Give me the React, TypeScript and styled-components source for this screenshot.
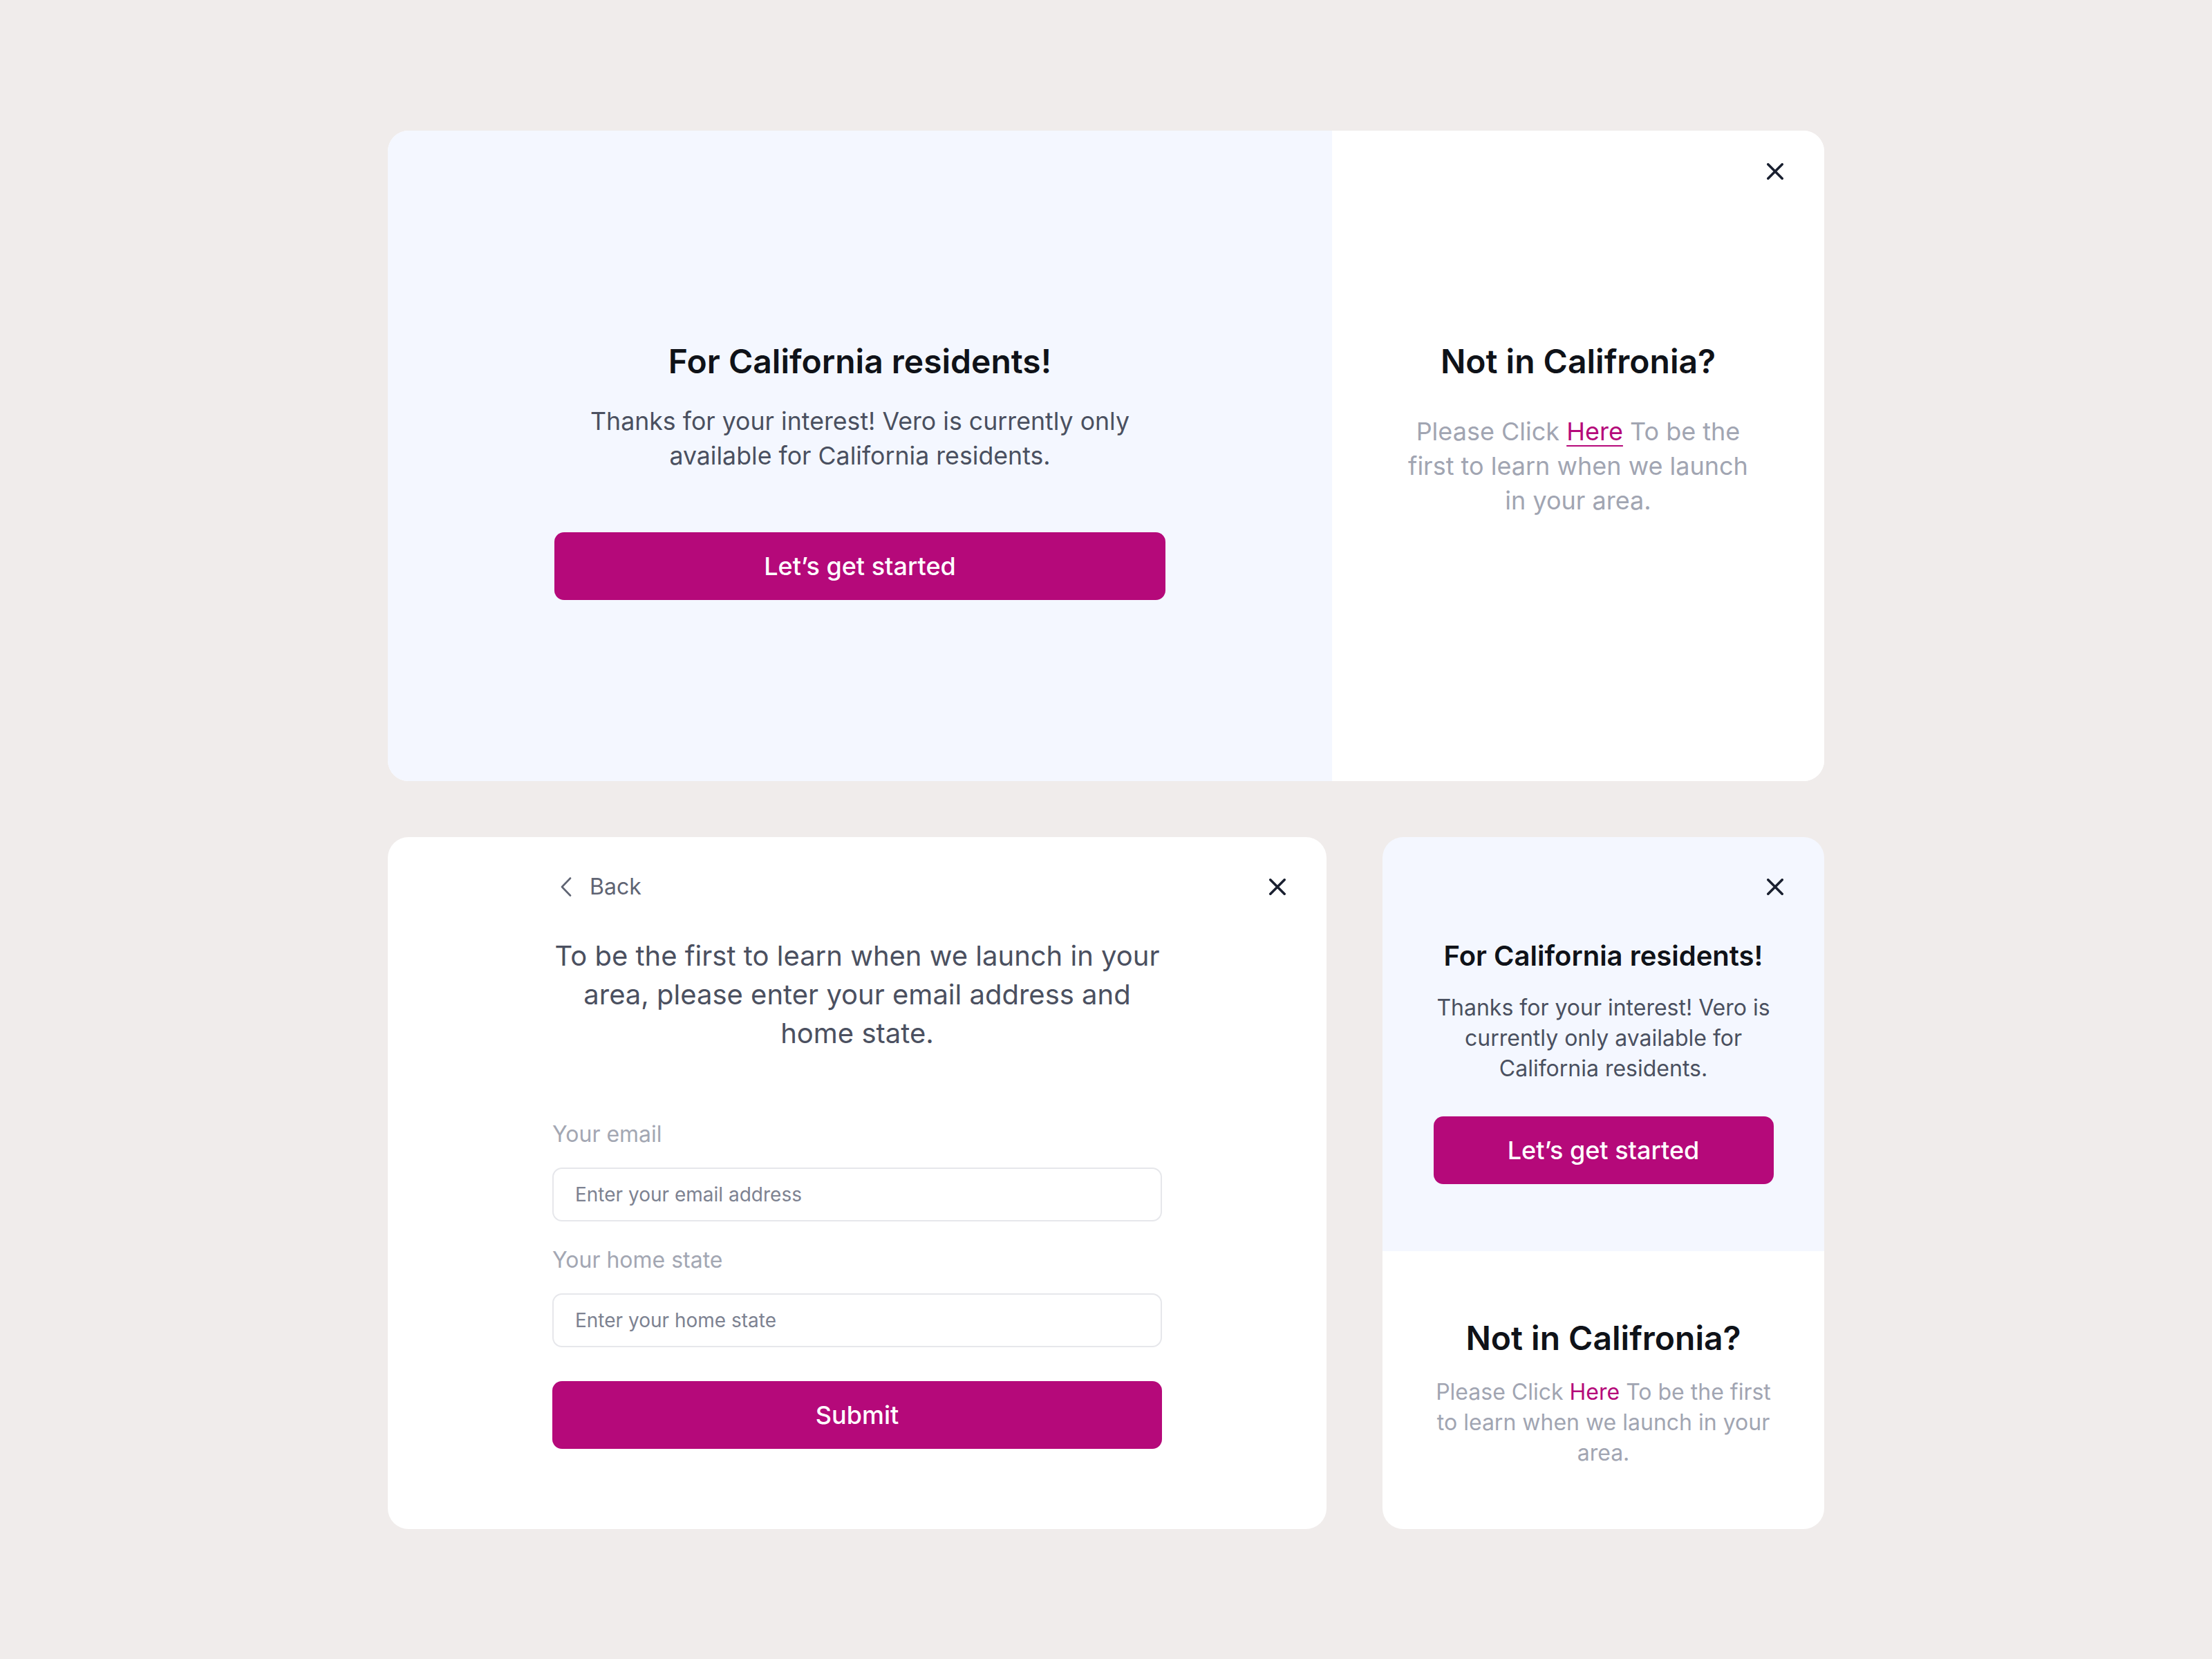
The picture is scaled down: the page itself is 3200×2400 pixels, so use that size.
import React from 'react';
import styled, { createGlobalStyle } from 'styled-components';

const GlobalStyle = createGlobalStyle`
  html, body {
    margin: 0;
    padding: 0;
    background: #f0eceb;
    font-family: Inter, "Noto Sans", "Liberation Sans", sans-serif;
  }
  * {
    box-sizing: border-box;
  }
`;

const MAGENTA = '#b5097a';

// весь экран, карточки по центру
const Page = styled.div`
  min-height: 100vh;
  display: flex;
  align-items: center;
  justify-content: center;
`;

const Stack = styled.div`
  display: flex;
  flex-direction: column;
  gap: 81px;
`;

const BottomRow = styled.div`
  display: flex;
  gap: 81px;
`;

// большая карточка из двух половин
const SplitCard = styled.div`
  position: relative;
  width: 2078px;
  height: 941px;
  display: grid;
  grid-template-columns: 1366px 1fr;
  border-radius: 30px;
  overflow: hidden;
  background: #fff;
`;

const Panel = styled.div<{ $tone: 'blue' | 'white'; $top: number }>`
  background: ${(p) => (p.$tone === 'blue' ? '#f4f7ff' : '#ffffff')};
  display: flex;
  flex-direction: column;
  align-items: center;
  padding-top: ${(p) => p.$top}px;
`;

const Title = styled.h2<{ $size?: number }>`
  margin: 0;
  font-size: ${(p) => p.$size ?? 48}px;
  line-height: 1.2;
  font-weight: 600;
  color: #0f1218;
  text-align: center;
`;

const Text = styled.p<{ $size: number; $lh: number; $muted?: boolean; $gap: number; $max: number }>`
  margin: ${(p) => p.$gap}px 0 0;
  max-width: ${(p) => p.$max}px;
  font-size: ${(p) => p.$size}px;
  line-height: ${(p) => p.$lh}px;
  color: ${(p) => (p.$muted ? '#a1a5b2' : '#4a5060')};
  text-align: center;
`;

const Accent = styled.a<{ $underline?: boolean }>`
  color: ${MAGENTA};
  text-decoration: ${(p) => (p.$underline ? 'underline' : 'none')};
  text-decoration-thickness: 2px;
  text-underline-offset: 7px;
  cursor: pointer;
`;

const PrimaryButton = styled.button<{ $width: number; $gap: number }>`
  margin-top: ${(p) => p.$gap}px;
  width: ${(p) => p.$width}px;
  height: 98px;
  border: none;
  border-radius: 14px;
  background: ${MAGENTA};
  color: #fff;
  font-family: inherit;
  font-size: 36px;
  font-weight: 500;
  cursor: pointer;
`;

// крестик поверх карточки
const CloseButton = styled.button<{ $top: number }>`
  position: absolute;
  top: ${(p) => p.$top}px;
  right: 59px;
  width: 24px;
  height: 24px;
  padding: 0;
  border: none;
  background: transparent;
  display: flex;
  cursor: pointer;
`;

const FormCard = styled.div`
  position: relative;
  width: 1358px;
  height: 1001px;
  background: #fff;
  border-radius: 30px;
  padding-top: 52px;
  display: flex;
  flex-direction: column;
  align-items: center;
`;

const BackRow = styled.a`
  width: 882px;
  padding-left: 12px;
  display: flex;
  align-items: center;
  gap: 26px;
  height: 40px;
  font-size: 32px;
  color: #5f6473;
  cursor: pointer;
`;

const Heading = styled.p`
  margin: 52px 0 0;
  max-width: 892px;
  font-size: 40px;
  line-height: 56px;
  color: #4b5060;
  text-align: center;
`;

const Form = styled.form`
  width: 882px;
  margin-top: 94px;
  display: flex;
  flex-direction: column;
`;

const Label = styled.label<{ $gap?: number }>`
  margin-top: ${(p) => p.$gap ?? 0}px;
  font-size: 32px;
  line-height: 48px;
  color: #a3a7b3;
`;

const Input = styled.input`
  margin-top: 24px;
  height: 78px;
  width: 100%;
  padding: 0 31px;
  border: 2px solid #e6e7eb;
  border-radius: 14px;
  background: #fff;
  font-family: inherit;
  font-size: 28px;
  color: #374151;
  outline: none;
  &::placeholder {
    color: #7d8291;
  }
`;

// узкая карточка: сверху голубая часть, снизу белая
const StackedCard = styled.div`
  position: relative;
  width: 639px;
  height: 1001px;
  border-radius: 30px;
  overflow: hidden;
  display: flex;
  flex-direction: column;
`;

const Section = styled.div<{ $tone: 'blue' | 'white'; $pad: string; $grow?: boolean }>`
  background: ${(p) => (p.$tone === 'blue' ? '#f4f7ff' : '#ffffff')};
  padding: ${(p) => p.$pad};
  flex: ${(p) => (p.$grow ? 1 : 'none')};
  display: flex;
  flex-direction: column;
  align-items: center;
`;

const CloseIcon = () => (
  <svg width="24" height="24" viewBox="0 0 24 24" fill="none">
    <path d="M1.8 1.8 22.2 22.2M22.2 1.8 1.8 22.2" stroke="#1a2030" strokeWidth="3.6" strokeLinecap="round" />
  </svg>
);

const ChevronLeft = () => (
  <svg width="16" height="28" viewBox="0 0 16 28" fill="none">
    <path d="M14 1.5 2 14l12 12.5" stroke="#5f6473" strokeWidth="2.6" strokeLinecap="round" strokeLinejoin="round" />
  </svg>
);

export default function App() {
  return (
    <Page>
      <GlobalStyle />
      <Stack>
        <SplitCard>
          <Panel $tone="blue" $top={305}>
            <Title>For California residents!</Title>
            <Text $size={35.7} $lh={50} $gap={33} $max={820}>
              Thanks for your interest! Vero is currently only available for California residents.
            </Text>
            <PrimaryButton $width={884} $gap={86}>Let’s get started</PrimaryButton>
          </Panel>
          <Panel $tone="white" $top={305}>
            <Title>Not in Califronia?</Title>
            <Text $size={36} $lh={50} $gap={48} $max={520} $muted>
              Please Click <Accent $underline>Here</Accent> To be the first to learn when we launch in your area.
            </Text>
          </Panel>
          <CloseButton $top={47} aria-label="Close">
            <CloseIcon />
          </CloseButton>
        </SplitCard>

        <BottomRow>
          <FormCard>
            <CloseButton $top={60} aria-label="Close">
              <CloseIcon />
            </CloseButton>
            <BackRow>
              <ChevronLeft />
              Back
            </BackRow>
            <Heading>
              To be the first to learn when we launch in your area, please enter your email address and home state.
            </Heading>
            <Form onSubmit={(e) => e.preventDefault()}>
              <Label>Your email</Label>
              <Input placeholder="Enter your email address" />
              <Label $gap={32}>Your home state</Label>
              <Input placeholder="Enter your home state" />
              <PrimaryButton $width={882} $gap={49} type="submit">Submit</PrimaryButton>
            </Form>
          </FormCard>

          <StackedCard>
            <CloseButton $top={60} aria-label="Close">
              <CloseIcon />
            </CloseButton>
            <Section $tone="blue" $pad="148px 0 97px">
              <Title $size={40}>For California residents!</Title>
              <Text $size={32} $lh={44} $gap={29} $max={510}>
                Thanks for your interest! Vero is currently only available for California residents.
              </Text>
              <PrimaryButton $width={492} $gap={47}>Let’s get started</PrimaryButton>
            </Section>
            <Section $tone="white" $pad="97px 0 0" $grow>
              <Title>Not in Califronia?</Title>
              <Text $size={32} $lh={44} $gap={28} $max={510} $muted>
                Please Click <Accent>Here</Accent> To be the first to learn when we launch in your area.
              </Text>
            </Section>
          </StackedCard>
        </BottomRow>
      </Stack>
    </Page>
  );
}
